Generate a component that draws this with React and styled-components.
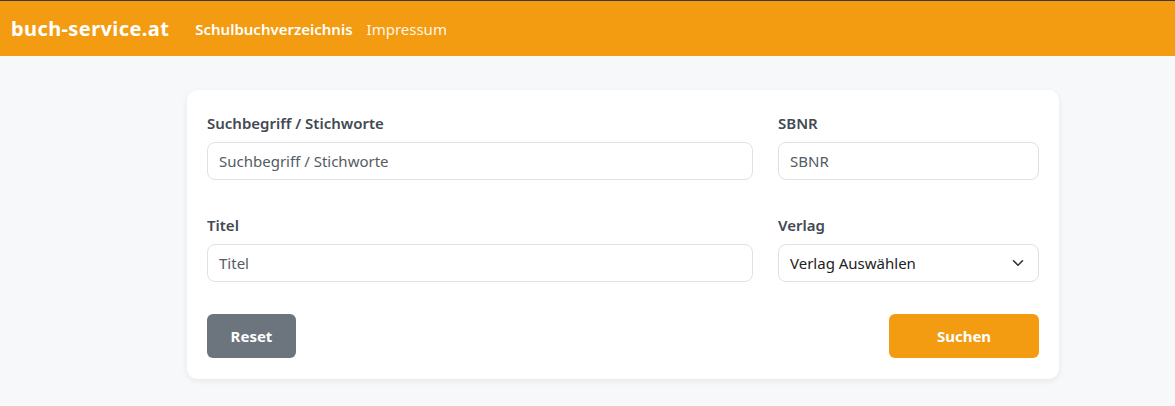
import React from "react";
import styled, { createGlobalStyle } from "styled-components";

const Global = createGlobalStyle`
  html, body { margin: 0; padding: 0; }
  body {
    background: #f7f8fa;
    font-family: "Segoe UI", "Noto Sans", "Open Sans", sans-serif;
    color: #3f4650;
  }
  * { box-sizing: border-box; }
`;

const Page = styled.div`
  min-height: 406px;
  border-top: 1px solid #3a3a3a;
`;

const NavBar = styled.nav`
  height: 55px;
  background: #f39c12;
  display: flex;
  align-items: center;
  padding: 0 11px;
`;

const Brand = styled.a`
  color: #fff;
  font-weight: 700;
  font-size: 20px;
  letter-spacing: 0.4px;
  margin-right: 26px;
  text-decoration: none;
`;

const NavLink = styled.a`
  color: ${(p) => (p.$active ? "#fff" : "rgba(255,255,255,0.92)")};
  font-weight: ${(p) => (p.$active ? 600 : 400)};
  font-size: 15px;
  margin-right: 14px;
  text-decoration: none;
`;

const Main = styled.main`
  display: flex;
  justify-content: flex-start;
  padding: 34px 0 0 187px;
`;

const Card = styled.form`
  width: 872px;
  background: #fff;
  border-radius: 10px;
  box-shadow: 0 2px 6px rgba(0, 0, 0, 0.07);
  padding: 22px 20px 21px;
`;

const Grid = styled.div`
  display: grid;
  grid-template-columns: 546px 261px;
  column-gap: 25px;
  row-gap: 34px;
`;

const Field = styled.div`
  display: flex;
  flex-direction: column;
`;

const Label = styled.label`
  font-weight: 600;
  font-size: 15px;
  line-height: 22px;
  color: #434952;
  margin-bottom: 8px;
`;

const Input = styled.input`
  height: 38px;
  border: 1px solid #dee2e6;
  border-radius: 8px;
  padding: 0 11px;
  font-family: inherit;
  font-size: 15px;
  color: #333;
  outline: none;
  &::placeholder { color: #555b63; }
`;

const SelectBox = styled.div`
  height: 38px;
  border: 1px solid #dee2e6;
  border-radius: 8px;
  padding: 0 14px 0 11px;
  display: flex;
  align-items: center;
  justify-content: space-between;
  font-size: 15px;
  color: #222;
`;

const Actions = styled.div`
  display: flex;
  justify-content: space-between;
  margin-top: 32px;
`;

const Button = styled.button`
  height: 44px;
  width: ${(p) => p.$w}px;
  border: none;
  border-radius: 6px;
  background: ${(p) => p.$bg};
  color: #fff;
  font-family: inherit;
  font-weight: 700;
  font-size: 15px;
  cursor: pointer;
`;

export default function App() {
  return (
    <Page>
      <Global />
      <NavBar>
        <Brand>buch-service.at</Brand>
        <NavLink $active>Schulbuchverzeichnis</NavLink>
        <NavLink>Impressum</NavLink>
      </NavBar>
      <Main>
        <Card onSubmit={(e) => e.preventDefault()}>
          <Grid>
            <Field>
              <Label>Suchbegriff / Stichworte</Label>
              <Input placeholder="Suchbegriff / Stichworte" />
            </Field>
            <Field>
              <Label>SBNR</Label>
              <Input placeholder="SBNR" />
            </Field>
            <Field>
              <Label>Titel</Label>
              <Input placeholder="Titel" />
            </Field>
            <Field>
              <Label>Verlag</Label>
              <SelectBox>
                <span>Verlag Auswählen</span>
                <svg width="12" height="8" viewBox="0 0 12 8" fill="none">
                  <path d="M1.5 1.8 6 6.2l4.5-4.4" stroke="#333" strokeWidth="1.6" strokeLinecap="round" strokeLinejoin="round" />
                </svg>
              </SelectBox>
            </Field>
          </Grid>
          <Actions>
            <Button type="button" $w={89} $bg="#6c757d">Reset</Button>
            <Button type="submit" $w={150} $bg="#f39c12">Suchen</Button>
          </Actions>
        </Card>
      </Main>
    </Page>
  );
}
